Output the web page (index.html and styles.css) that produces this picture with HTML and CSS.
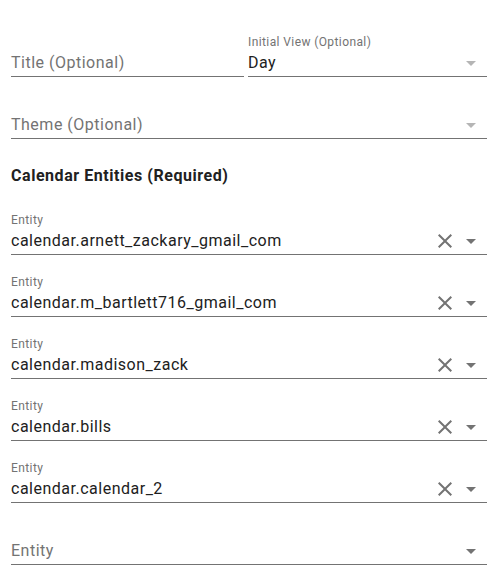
FILE: index.html
```html
<!DOCTYPE html>
<html lang="en">
<head>
    <meta charset="UTF-8">
    <meta name="viewport" content="width=device-width, initial-scale=1.0">
    <title>Calendar Card Editor</title>
    <link rel="stylesheet" href="styles.css">
</head>
<body>
    <div class="editor">
        <div class="row">
            <div class="field">
                <div class="label"></div>
                <div class="value placeholder">Title (Optional)</div>
            </div>
            <div class="field">
                <div class="label">Initial View (Optional)</div>
                <div class="value">
                    <span class="text">Day</span>
                    <svg class="icon arrow light" viewBox="0 0 24 24"><path d="M7 10l5 5 5-5z"/></svg>
                </div>
            </div>
        </div>

        <div class="field">
            <div class="label"></div>
            <div class="value placeholder">
                <span class="text">Theme (Optional)</span>
                <svg class="icon arrow light" viewBox="0 0 24 24"><path d="M7 10l5 5 5-5z"/></svg>
            </div>
        </div>

        <h3 class="section-title">Calendar Entities (Required)</h3>

        <div class="entities">
            <div class="field">
                <div class="label">Entity</div>
                <div class="value">
                    <span class="text">calendar.arnett_zackary_gmail_com</span>
                    <svg class="icon clear" viewBox="0 0 24 24"><path d="M19 6.41L17.59 5 12 10.59 6.41 5 5 6.41 10.59 12 5 17.59 6.41 19 12 13.41 17.59 19 19 17.59 13.41 12z"/></svg>
                    <svg class="icon arrow" viewBox="0 0 24 24"><path d="M7 10l5 5 5-5z"/></svg>
                </div>
            </div>
            <div class="field">
                <div class="label">Entity</div>
                <div class="value">
                    <span class="text">calendar.m_bartlett716_gmail_com</span>
                    <svg class="icon clear" viewBox="0 0 24 24"><path d="M19 6.41L17.59 5 12 10.59 6.41 5 5 6.41 10.59 12 5 17.59 6.41 19 12 13.41 17.59 19 19 17.59 13.41 12z"/></svg>
                    <svg class="icon arrow" viewBox="0 0 24 24"><path d="M7 10l5 5 5-5z"/></svg>
                </div>
            </div>
            <div class="field">
                <div class="label">Entity</div>
                <div class="value">
                    <span class="text">calendar.madison_zack</span>
                    <svg class="icon clear" viewBox="0 0 24 24"><path d="M19 6.41L17.59 5 12 10.59 6.41 5 5 6.41 10.59 12 5 17.59 6.41 19 12 13.41 17.59 19 19 17.59 13.41 12z"/></svg>
                    <svg class="icon arrow" viewBox="0 0 24 24"><path d="M7 10l5 5 5-5z"/></svg>
                </div>
            </div>
            <div class="field">
                <div class="label">Entity</div>
                <div class="value">
                    <span class="text">calendar.bills</span>
                    <svg class="icon clear" viewBox="0 0 24 24"><path d="M19 6.41L17.59 5 12 10.59 6.41 5 5 6.41 10.59 12 5 17.59 6.41 19 12 13.41 17.59 19 19 17.59 13.41 12z"/></svg>
                    <svg class="icon arrow" viewBox="0 0 24 24"><path d="M7 10l5 5 5-5z"/></svg>
                </div>
            </div>
            <div class="field">
                <div class="label">Entity</div>
                <div class="value">
                    <span class="text">calendar.calendar_2</span>
                    <svg class="icon clear" viewBox="0 0 24 24"><path d="M19 6.41L17.59 5 12 10.59 6.41 5 5 6.41 10.59 12 5 17.59 6.41 19 12 13.41 17.59 19 19 17.59 13.41 12z"/></svg>
                    <svg class="icon arrow" viewBox="0 0 24 24"><path d="M7 10l5 5 5-5z"/></svg>
                </div>
            </div>
            <div class="field">
                <div class="label"></div>
                <div class="value placeholder">
                    <span class="text">Entity</span>
                    <svg class="icon arrow" viewBox="0 0 24 24"><path d="M7 10l5 5 5-5z"/></svg>
                </div>
            </div>
        </div>
    </div>
</body>
</html>
```

FILE: styles.css
```css
body {
    margin: 0;
    background: #fff;
    font-family: Roboto, 'Noto Sans', sans-serif;
    color: #212121;
}

.editor {
    padding: 21px 14px 0 11px;
    display: flex;
    flex-direction: column;
}

.row {
    display: grid;
    grid-template-columns: 233px 1fr;
    gap: 4px;
    margin-bottom: 6px;
}

.field {
    height: 56px;
    box-sizing: border-box;
    display: flex;
    flex-direction: column;
    justify-content: flex-end;
    padding-bottom: 1px;
    border-bottom: 1px solid #737373;
}

.label {
    font-size: 12px;
    line-height: 16px;
    height: 16px;
    margin-bottom: 1px;
    letter-spacing: 0.4px;
    color: #737373;
}

.value {
    display: flex;
    align-items: center;
    font-size: 16px;
    line-height: 24px;
    height: 24px;
    letter-spacing: 0.5px;
}

.value .text {
    flex: 1;
    white-space: nowrap;
}

.placeholder {
    color: #737373;
}

.icon {
    width: 24px;
    height: 24px;
    fill: #737373;
    flex-shrink: 0;
}

.icon.clear {
    margin-right: 2px;
}

.icon.arrow {
    margin-right: 4px;
}

.icon.light {
    fill: #b5b5b5;
}

.section-title {
    margin: 0;
    padding: 28px 0 14px;
    font-size: 16px;
    line-height: 18px;
    font-weight: 700;
    letter-spacing: 0.55px;
    color: #212121;
}

.entities {
    display: flex;
    flex-direction: column;
    gap: 6px;
}
```
